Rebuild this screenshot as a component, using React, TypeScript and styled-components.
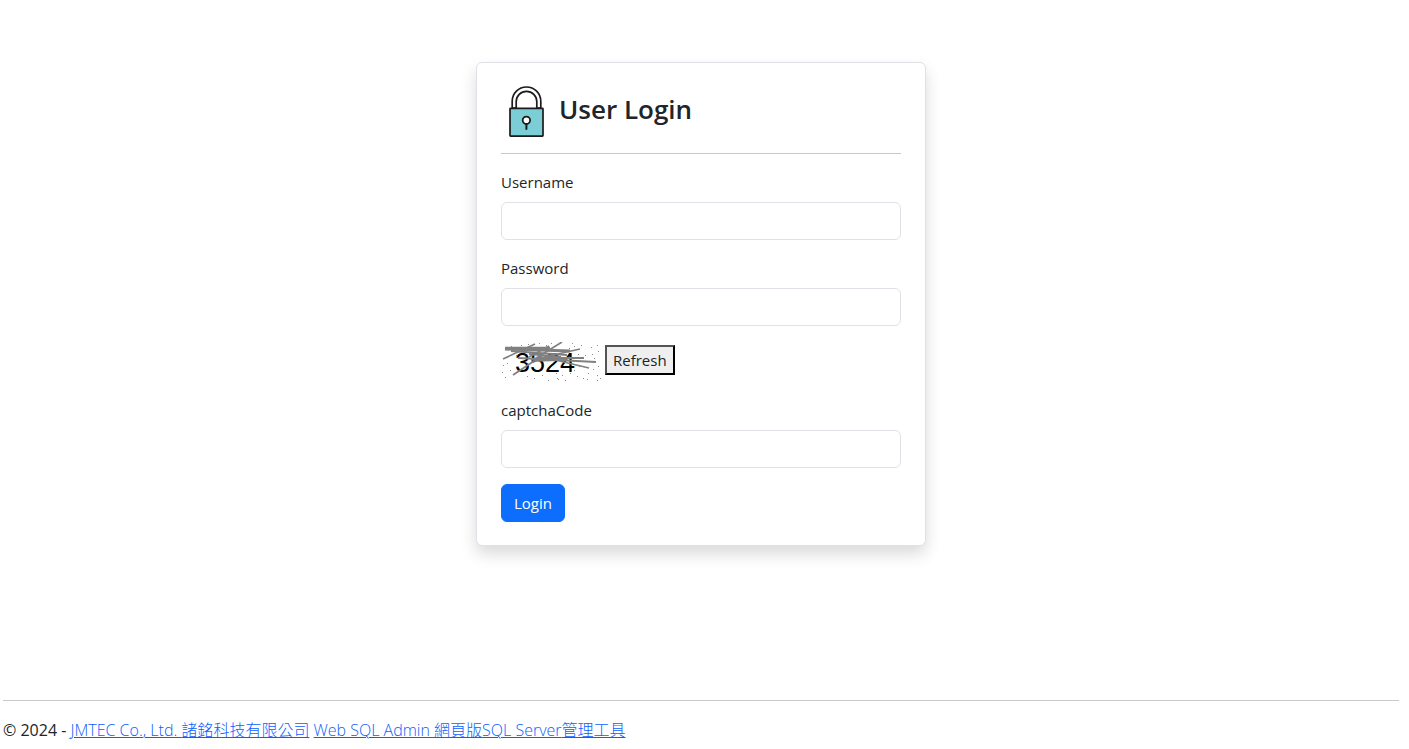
import React from "react";
import styled, { createGlobalStyle } from "styled-components";

const GlobalStyle = createGlobalStyle`
  *, *::before, *::after { box-sizing: border-box; }
  body {
    margin: 0;
    background: #fff;
    color: #212529;
    font-family: "Open Sans", "Noto Sans CJK TC", sans-serif;
    font-size: 15px;
    line-height: 24px;
  }
`;

const Page = styled.div`
  display: flex;
  flex-direction: column;
  min-height: 100vh;
  padding: 62px 10px 7px 3px;
`;

const Main = styled.main`
  display: flex;
  justify-content: center;
  padding-bottom: 48px;
`;

const Card = styled.section`
  width: 100%;
  max-width: 450px;
  padding: 23px 24px;
  border: 1px solid #dee2e6;
  border-radius: 6px;
  background: #fff;
  box-shadow: 0 8px 16px rgba(0, 0, 0, 0.15);
`;

const CardHeader = styled.header`
  display: flex;
  align-items: flex-start;
  gap: 15px;
  height: 52px;
  padding-left: 8px;
`;

const Title = styled.h1`
  margin: 0;
  padding-top: 6px;
  font-size: 26px;
  font-weight: 600;
  line-height: 34px;
`;

const Divider = styled.hr`
  width: 100%;
  margin: 0 0 16px;
  border: 0;
  border-top: 1px solid #c8c9ca;
`;

const Form = styled.form`
  display: flex;
  flex-direction: column;
  align-items: flex-start;
  gap: 16px;
`;

const CardDivider = styled(Divider)`
  margin-top: 15px;
`;

const Field = styled.div`
  display: flex;
  flex-direction: column;
  gap: 8px;
  width: 100%;
`;

const Input = styled.input`
  width: 100%;
  height: 38px;
  padding: 6px 12px;
  border: 1px solid #dee2e6;
  border-radius: 6px;
  background: #fff;
  color: inherit;
  font: inherit;
`;

const CaptchaRow = styled.div`
  display: flex;
  align-items: flex-start;
  gap: 4px;
  height: 40px;
`;

const RefreshButton = styled.button`
  height: 30px;
  margin-top: 3px;
  padding: 0 6px;
  border: 2px outset #000;
  background: #efefef;
  color: #212529;
  font: inherit;
`;

const LoginButton = styled.button`
  height: 38px;
  padding: 0 12px;
  border: 1px solid #0d6efd;
  border-radius: 6px;
  background: #0d6efd;
  color: #fff;
  font: inherit;
`;

const Footer = styled.footer`
  margin-top: auto;
  font-size: 16px;
`;

const Link = styled.a`
  color: #0d5efd;
  font-weight: 300;
  text-decoration: underline;
  text-decoration-thickness: 1px;
`;

const Han = styled.span`
  font-family: "Noto Sans CJK TC", sans-serif;
`;

const Padlock = () => (
  <svg width="35" height="52" viewBox="0 0 35 52" aria-hidden="true">
    <path
      d="M3.2 22V15.3a14.3 14.3 0 0 1 28.6 0V22h-4V15.6a10.3 10.3 0 0 0-20.6 0V22z"
      fill="#fff"
      stroke="#1b1b1b"
      strokeWidth="1.7"
    />
    <rect x="1" y="22.3" width="33" height="27.9" rx="0.6" fill="#7bced6" stroke="#1b1b1b" strokeWidth="1.7" />
    <path d="M17.4 38v5" stroke="#1b1b1b" strokeWidth="2" strokeLinecap="round" />
    <circle cx="17.4" cy="34.3" r="3.7" fill="#fff" stroke="#1b1b1b" strokeWidth="1.8" />
  </svg>
);

const scratches = [
  [4, 6, 49, 6, 2.4],
  [4, 7, 69, 9, 3],
  [10, 9, 66, 13, 2],
  [2, 17, 34, 2, 1.7],
  [12, 33, 42, 13, 1.7],
  [30, 18, 79, 7, 1.7],
  [32, 18, 61, 0, 1.7],
  [28, 15, 48, 4, 1.7],
  [17, 16, 95, 20, 1.8],
  [36, 16, 83, 16, 2],
  [34, 18, 66, 17, 3.4],
  [28, 12, 60, 15, 2],
  [50, 17, 88, 26, 1.7],
];

const specks = [
  [1, 30], [4, 35], [2, 23], [9, 28], [10, 4], [27, 2], [38, 1], [45, 3], [50, 1], [33, 36], [47, 38],
  [56, 36], [57, 37], [64, 38], [55, 31], [61, 33], [71, 1], [73, 4], [68, 6], [80, 3], [84, 13], [90, 5],
  [96, 3], [97, 9], [93, 16], [97, 24], [92, 27], [87, 31], [96, 33], [82, 36], [76, 34], [99, 36], [96, 38],
  [73, 28], [78, 24], [69, 31], [26, 34], [41, 33], [15, 13], [86, 37], [91, 12], [77, 12], [6, 21], [20, 3],
];

const Captcha = () => (
  <svg width="100" height="40" viewBox="0 0 100 40" role="img" aria-label="Captcha">
    <text x="14" y="30" fontFamily="Liberation Sans, sans-serif" fontSize="27" fill="#000">
      3524
    </text>
    {scratches.map(([x1, y1, x2, y2, w], i) => (
      <line key={i} x1={x1} y1={y1} x2={x2} y2={y2} stroke="#808080" strokeWidth={w} />
    ))}
    {specks.map(([x, y], i) => (
      <rect key={i} x={x} y={y} width="1" height="1" fill="#8a8a8a" />
    ))}
  </svg>
);

export default function App() {
  return (
    <>
      <GlobalStyle />
      <Page>
        <Main>
          <Card>
            <CardHeader>
              <Padlock />
              <Title>User Login</Title>
            </CardHeader>
            <CardDivider />
            <Form onSubmit={(e) => e.preventDefault()}>
              <Field>
                <label htmlFor="username">Username</label>
                <Input id="username" type="text" />
              </Field>
              <Field>
                <label htmlFor="password">Password</label>
                <Input id="password" type="password" />
              </Field>
              <CaptchaRow>
                <Captcha />
                <RefreshButton type="button">Refresh</RefreshButton>
              </CaptchaRow>
              <Field>
                <label htmlFor="captchaCode">captchaCode</label>
                <Input id="captchaCode" type="text" />
              </Field>
              <LoginButton type="submit">Login</LoginButton>
            </Form>
          </Card>
        </Main>
        <Footer>
          <Divider />
          © 2024 -{" "}
          <Link href="#company">
            JMTEC Co., Ltd. <Han>諸銘科技有限公司</Han>
          </Link>{" "}
          <Link href="#product">
            Web SQL Admin <Han>網頁版</Han>SQL Server<Han>管理工具</Han>
          </Link>
        </Footer>
      </Page>
    </>
  );
}
